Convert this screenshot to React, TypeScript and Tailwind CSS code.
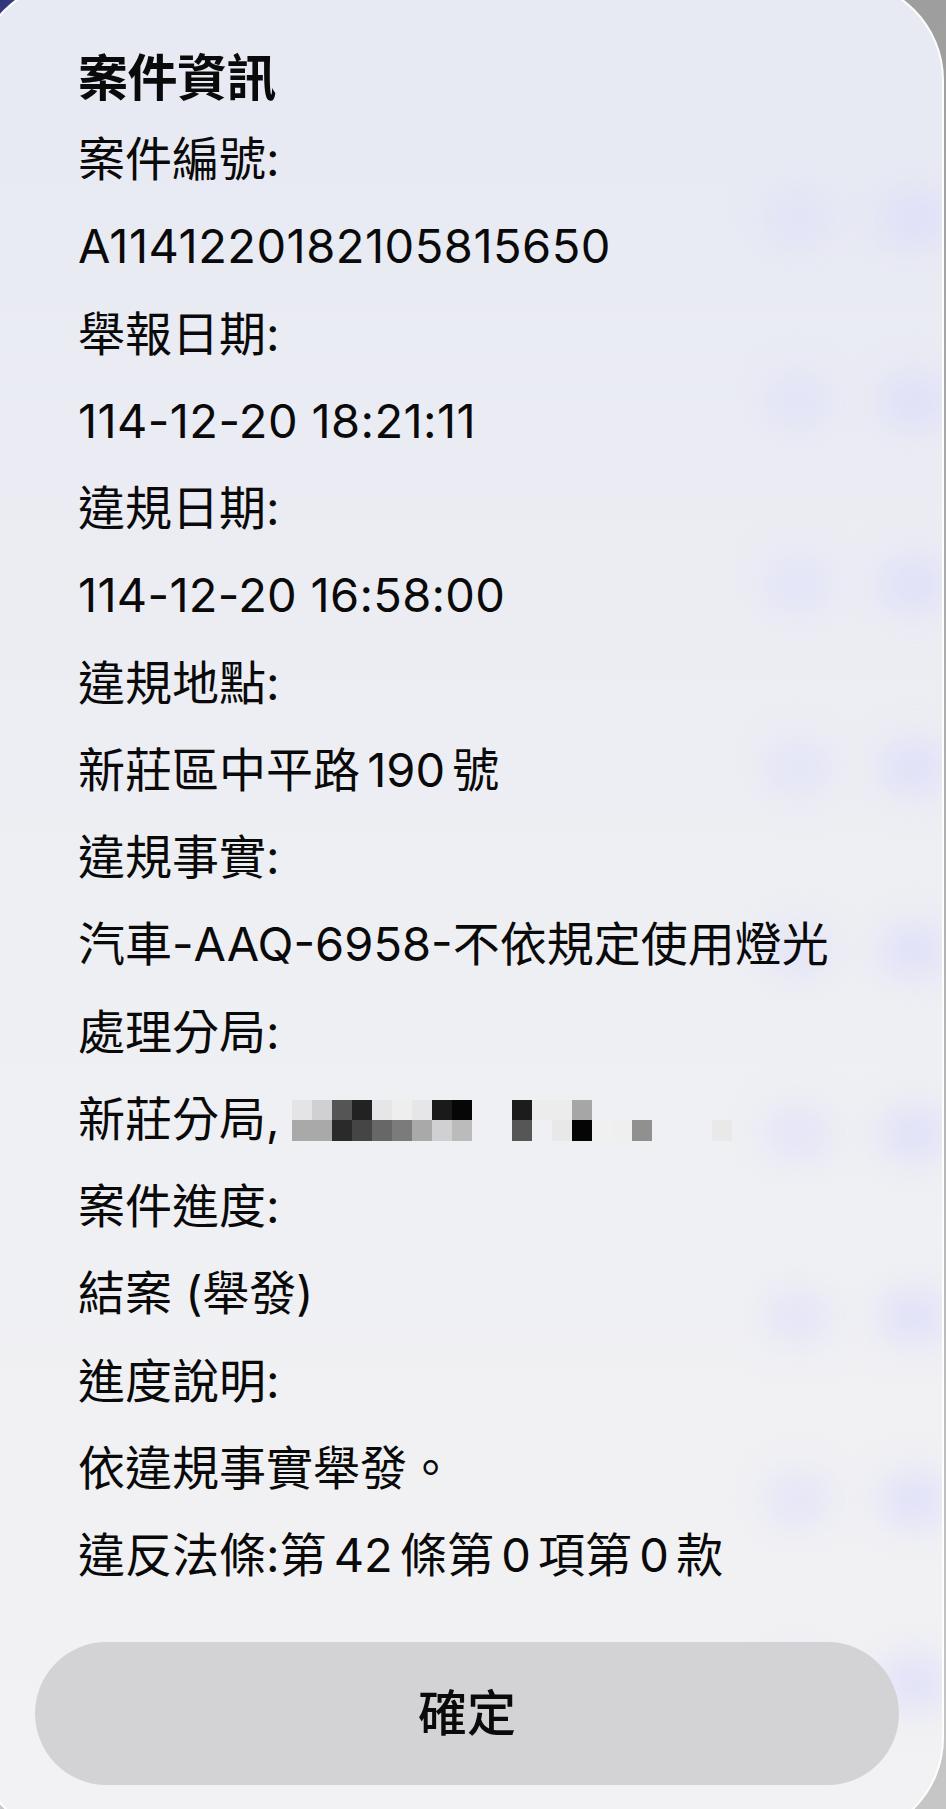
import React from "react";

type Row = { text: string; cls?: string };

const rows: Row[] = [
  { text: "案件編號:" },
  { text: "A11412201821058" + "15650", cls: "tracking-[0.5px]" },
  { text: "舉報日期:" },
  { text: "114-12-20 18:21:11", cls: "tracking-[0.4px]" },
  { text: "違規日期:" },
  { text: "114-12-20 16:58:00", cls: "tracking-[0.3px]" },
  { text: "違規地點:" },
  { text: "新莊區中平路 190 號", cls: "[word-spacing:-6px]" },
  { text: "違規事實:" },
  { text: "汽車-AAQ-6958-不依規定使用燈光" },
  { text: "處理分局:" },
  { text: "MOSAIC" },
  { text: "案件進度:" },
  { text: "結案 (舉發)" },
  { text: "進度說明:" },
  { text: "依違規事實舉發。" },
  { text: "違反法條:第 42 條第 0 項第 0 款", cls: "[word-spacing:-6px]" },
];

// pixelated (redacted) block behind the precinct name, two rows of 20px cells
const mosaicTop = [
  "bg-[#e4e4e6]", "bg-[#d0d0d2]", "bg-[#555555]", "bg-[#222222]", "bg-[#e6e6e8]",
  "bg-[#eeeeef]", "bg-[#e6e6e8]", "bg-[#1a1a1a]", "bg-[#060606]", "bg-transparent",
  "bg-transparent", "bg-[#1c1c1c]", "bg-[#ececed]", "bg-[#ececed]", "bg-[#a6a6a6]",
];
const mosaicBottom = [
  "bg-[#a9a9aa]", "bg-[#a9a9aa]", "bg-[#2a2a2a]", "bg-[#454545]", "bg-[#676767]",
  "bg-[#7b7b7b]", "bg-[#a9a9aa]", "bg-[#d0d0d2]", "bg-[#bbbbbc]", "bg-transparent",
  "bg-transparent", "bg-[#565656]", "bg-transparent", "bg-[#e8e8e9]", "bg-[#050505]",
  "bg-[#f0f0f1]", "bg-[#efeff0]", "bg-[#909090]", "bg-transparent", "bg-transparent",
  "bg-transparent", "bg-[#e9e9ea]",
];

function Mosaic() {
  return (
    <span className="inline-flex flex-col align-middle ml-[12px] -mt-[4px]">
      <span className="flex">
        {mosaicTop.map((c, i) => (
          <span key={i} className={`w-[20px] h-[20px] ${c}`} />
        ))}
      </span>
      <span className="flex">
        {mosaicBottom.map((c, i) => (
          <span key={i} className={`w-[20px] h-[21px] ${c}`} />
        ))}
      </span>
    </span>
  );
}

function Blobs() {
  return (
    <div className="absolute left-[785px] top-[208px] flex flex-col gap-[126px] pointer-events-none">
      {Array.from({ length: 9 }).map((_, i) => (
        <div key={i} className="flex gap-[44px] h-[57px]">
          <div className="w-[72px] h-[57px] rounded-full bg-[#dedefb] opacity-60 blur-[18px]" />
          <div className="w-[72px] h-[57px] rounded-full bg-[#dcdcfb] opacity-75 blur-[18px]" />
        </div>
      ))}
    </div>
  );
}

export default function App() {
  return (
    <div className="relative w-[946px] h-[1809px] overflow-hidden bg-linear-to-b from-[#9e9e9e] to-[#c6c6c6] font-['Inter','Noto_Sans_CJK_TC',sans-serif] text-[#0a0a0a]">
      <div className="absolute left-0 top-0 w-[40px] h-[40px] bg-linear-to-br from-[#2f3577] to-[#4a5090]" />
      <div className="relative -ml-[25px] -mt-[20px] w-[969px] h-[1858px] rounded-[100px] border-2 border-white/90 bg-linear-to-b from-[#e7e9f3] via-[#eeeff3] to-[#f2f2f4] overflow-hidden">
        <Blobs />
        <div className="relative pt-[59px] pl-[101px]">
          <h1 className="text-[50px] leading-[74px] font-bold tracking-[-0.5px]">案件資訊</h1>
          <div>
            {rows.map((r, i) => (
              <div key={i} className={`text-[47px] leading-[87.25px] whitespace-nowrap ${r.cls ?? ""}`}>
                {r.text === "MOSAIC" ? (
                  <>
                    新莊分局,
                    <Mosaic />
                  </>
                ) : (
                  r.text
                )}
              </div>
            ))}
          </div>
        </div>
        <div className="relative mt-[44px] ml-[58px] w-[864px] h-[143px] rounded-full bg-[#d3d3d6] flex items-center justify-center">
          <span className="text-[49px] font-medium">確定</span>
        </div>
      </div>
    </div>
  );
}
